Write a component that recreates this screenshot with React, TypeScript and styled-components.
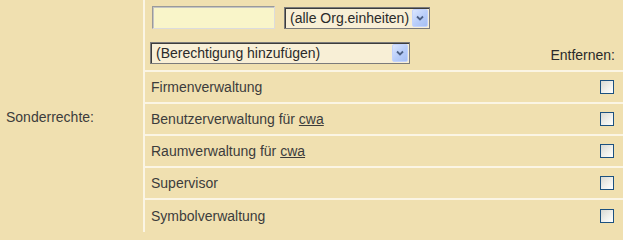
import React from 'react';
import styled, { createGlobalStyle } from 'styled-components';

const GlobalStyle = createGlobalStyle`
  html, body {
    margin: 0;
    padding: 0;
    background: #f0e0b0;
  }
  body {
    font-family: "Liberation Sans", Arial, sans-serif;
  }
`;

const beige = '#f0e0b0';
const gapColour = '#fbf5e4';
const textColour = '#3c3c3c';

const Table = styled.div`
  display: flex;
  gap: 2px;
  width: 623px;
  height: 232px;
  background: ${gapColour};
  font-size: 14px;
  color: ${textColour};
`;

const LabelCell = styled.div`
  width: 143px;
  flex: none;
  display: flex;
  align-items: center;
  padding: 2px 0 0 6px;
  box-sizing: border-box;
  background: ${beige};
`;

const Rows = styled.div`
  flex: 1;
  display: flex;
  flex-direction: column;
  gap: 2px;
`;

const Header = styled.div`
  height: 70px;
  flex: none;
  box-sizing: border-box;
  padding: 6px 8px 0 5px;
  display: flex;
  flex-direction: column;
  gap: 12px;
  background: ${beige};
`;

const HeaderLine = styled.div`
  display: flex;
  align-items: center;
  gap: 9px;
`;

const TextInput = styled.input`
  box-sizing: border-box;
  width: 123px;
  height: 23px;
  margin: 0 0 0 2px;
  padding: 0 3px;
  background: #f9f5c9;
  border: 1px solid;
  border-color: #9a9a9a #dcdcdc #dcdcdc #9a9a9a;
  box-shadow: inset 1px 1px 0 #c4c4c4;
  outline: none;
  font: inherit;
`;

const SelectBox = styled.div<{ width: number }>`
  box-sizing: border-box;
  width: ${p => p.width}px;
  height: 22px;
  display: flex;
  align-items: center;
  background: #f8efd6;
  border: 1px solid #7b7b7b;
  box-shadow: inset 1px 1px 0 #3c3c3c;
  padding: 1px 1px 1px 5px;
  margin-top: 1px;
`;

const SelectText = styled.span`
  flex: 1;
  white-space: nowrap;
  overflow: hidden;
  color: #2a2a2a;
`;

const DropButton = styled.span`
  width: 16px;
  height: 18px;
  flex: none;
  display: flex;
  align-items: center;
  justify-content: center;
  box-sizing: border-box;
  border: 1px solid #c3d3fd;
  border-radius: 2px;
  background: linear-gradient(135deg, #dbe6fe 0%, #b8cdf9 55%, #a6bff3 100%);
`;

const SelectLine = styled.div`
  display: flex;
  align-items: center;
  justify-content: space-between;
`;

const RemoveLabel = styled.span`
  margin-top: 5px;
  color: #2a2a2a;
`;

const Row = styled.div<{ last?: boolean }>`
  height: 30px;
  flex: ${p => (p.last ? 1 : 'none')};
  box-sizing: border-box;
  display: flex;
  align-items: center;
  justify-content: space-between;
  padding: 0 9px 0 6px;
  background: ${beige};
`;

const Link = styled.a`
  color: #3c3c3c;
  text-decoration: underline;
`;

const Checkbox = styled.span`
  width: 14px;
  height: 14px;
  box-sizing: border-box;
  border: 1px solid #1c5180;
  background: linear-gradient(135deg, #d9d9d3 0%, #f2f2ee 60%, #ffffff 100%);
`;

const Chevron = () => (
  <svg width="8" height="6" viewBox="0 0 8 6">
    <path d="M1 1.5 L4 4.5 L7 1.5" fill="none" stroke="#4d6185" strokeWidth="1.8" />
  </svg>
);

const Select = ({ width, label }: { width: number; label: string }) => (
  <SelectBox width={width}>
    <SelectText>{label}</SelectText>
    <DropButton>
      <Chevron />
    </DropButton>
  </SelectBox>
);

const rights: React.ReactNode[] = [
  'Firmenverwaltung',
  <>Benutzerverwaltung für <Link href="#">cwa</Link></>,
  <>Raumverwaltung für <Link href="#">cwa</Link></>,
  'Supervisor',
  'Symbolverwaltung',
];

export default function App() {
  return (
    <>
      <GlobalStyle />
      <Table>
        <LabelCell>Sonderrechte:</LabelCell>
        <Rows>
          <Header>
            <HeaderLine>
              <TextInput type="text" />
              <Select width={146} label="(alle Org.einheiten)" />
            </HeaderLine>
            <SelectLine>
              <Select width={260} label="(Berechtigung hinzufügen)" />
              <RemoveLabel>Entfernen:</RemoveLabel>
            </SelectLine>
          </Header>
          {rights.map((r, i) => (
            <Row key={i} last={i === rights.length - 1}>
              <span>{r}</span>
              <Checkbox />
            </Row>
          ))}
        </Rows>
      </Table>
    </>
  );
}
